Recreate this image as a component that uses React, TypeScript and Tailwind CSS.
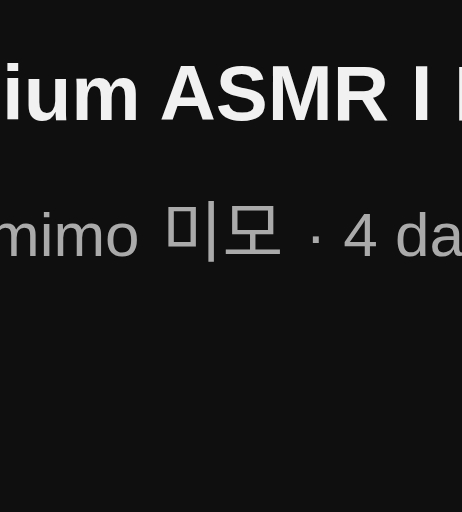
import React from "react";

const App: React.FC = () => {
  return (
    <div className="w-[462px] h-[512px] bg-[#0f0f0f] overflow-hidden font-['Liberation_Sans','Noto_Sans_CJK_KR',sans-serif]">
      <div className="pt-[48px]">
        <h1 className="pl-[2px] text-[78px] leading-[90px] font-bold text-[#f1f1f1] whitespace-nowrap">
          ium ASMR I Rain
        </h1>
        <p className="mt-[57px] ml-[-12px] text-[62px] leading-[64px] text-[#aaaaaa] whitespace-nowrap flex items-baseline">
          <span>mimo&nbsp;</span>
          <span className="mx-[5px] text-[66px] font-['Noto_Sans_CJK_KR',sans-serif]">미모</span>
          <span>&nbsp;· 4 days ago</span>
        </p>
      </div>
    </div>
  );
};

export default App;
